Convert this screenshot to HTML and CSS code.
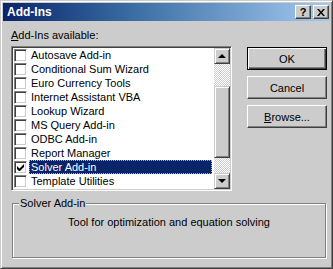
FILE: index.html
```html
<!DOCTYPE html>
<html lang="en">
<head>
    <meta charset="UTF-8">
    <title>Add-Ins</title>
    <link rel="stylesheet" href="styles.css">
</head>
<body>
    <div class="window">
        <div class="titlebar">
            <span class="title">Add-Ins</span>
            <span class="tb-btns">
                <span class="tb-btn help">?</span>
                <span class="tb-btn">
                    <svg width="8" height="7" viewBox="0 0 8 7"><path d="M0 0h2l2 2.5L6 0h2L5 3.5 8 7H6L4 4.5 2 7H0l3-3.5z" fill="#000"/></svg>
                </span>
            </span>
        </div>

        <div class="content">
            <div class="main">
                <div class="left">
                    <label class="caption"><u>A</u>dd-Ins available:</label>
                    <div class="listbox">
                        <ul class="items">
                            <li class="item"><span class="check"></span><span class="name">Autosave Add-in</span></li>
                            <li class="item"><span class="check"></span><span class="name">Conditional Sum Wizard</span></li>
                            <li class="item"><span class="check"></span><span class="name">Euro Currency Tools</span></li>
                            <li class="item"><span class="check"></span><span class="name">Internet Assistant VBA</span></li>
                            <li class="item"><span class="check"></span><span class="name">Lookup Wizard</span></li>
                            <li class="item"><span class="check"></span><span class="name">MS Query Add-in</span></li>
                            <li class="item"><span class="check"></span><span class="name">ODBC Add-in</span></li>
                            <li class="item"><span class="check"></span><span class="name">Report Manager</span></li>
                            <li class="item selected">
                                <span class="check">
                                    <svg width="7" height="7" viewBox="0 0 7 7"><path d="M0 2v3l2 2h1l4-4V0L2.5 4.5z" fill="#000"/></svg>
                                </span>
                                <span class="name">Solver Add-in</span>
                            </li>
                            <li class="item"><span class="check"></span><span class="name">Template Utilities</span></li>
                        </ul>
                        <div class="scrollbar">
                            <span class="sb-btn"><span class="arrow up"></span></span>
                            <div class="sb-track"><div class="sb-thumb"></div></div>
                            <span class="sb-btn"><span class="arrow down"></span></span>
                        </div>
                    </div>
                </div>

                <div class="buttons">
                    <button class="btn default">OK</button>
                    <button class="btn">Cancel</button>
                    <button class="btn"><u>B</u>rowse...</button>
                </div>
            </div>

            <fieldset class="group">
                <legend>Solver Add-in</legend>
                <p class="desc">Tool for optimization and equation solving</p>
            </fieldset>
        </div>
    </div>
</body>
</html>
```

FILE: styles.css
```css
* {
    box-sizing: border-box;
}
body {
    margin: 0;
    font-family: "Liberation Sans", Arial, sans-serif;
    font-size: 11px;
    color: #000;
    background-color: #cccccc;
}
.window {
    width: 333px;
    height: 269px;
    padding: 2px;
    background-color: #cccccc;
    border: 1px solid;
    border-color: #cccccc #404040 #404040 #cccccc;
    box-shadow: inset 1px 1px #fff, inset -1px -1px #808080;
    display: flex;
    flex-direction: column;
}
.titlebar {
    height: 18px;
    padding: 0 1px 0 4px;
    background: linear-gradient(to right, #0a246a, #3a6ea5 40%, #a6caf0);
    display: flex;
    align-items: center;
    justify-content: space-between;
}
.title {
    color: #fff;
    font-weight: bold;
    font-size: 12px;
}
.tb-btns {
    display: flex;
    gap: 2px;
}
.tb-btn {
    width: 16px;
    height: 14px;
    background-color: #cccccc;
    border: 1px solid;
    border-color: #fff #404040 #404040 #fff;
    box-shadow: inset -1px -1px #808080;
    display: flex;
    align-items: center;
    justify-content: center;
}
.tb-btn.help {
    font-weight: bold;
    font-size: 11px;
    line-height: 11px;
}
.content {
    flex: 1;
    padding: 0 0 0 8px;
    display: flex;
    flex-direction: column;
}
.main {
    display: flex;
    gap: 15px;
}
.left {
    width: 221px;
    padding-top: 8px;
}
.caption {
    display: block;
    line-height: 13px;
    margin-bottom: 4px;
}
.listbox {
    height: 145px;
    padding: 1px;
    background-color: #fff;
    border: 1px solid;
    border-color: #808080 #fff #fff #808080;
    box-shadow: inset 1px 1px #404040, inset -1px -1px #cccccc;
    display: flex;
}
.items {
    list-style: none;
    margin: 0;
    padding: 0;
    flex: 1;
}
.item {
    height: 14px;
    display: flex;
    align-items: center;
}
.check {
    width: 13px;
    height: 13px;
    margin-left: 1px;
    margin-right: 2px;
    background-color: #fff;
    border: 1px solid;
    border-color: #808080 #fff #fff #808080;
    box-shadow: inset 1px 1px #404040, inset -1px -1px #cccccc;
    display: flex;
    align-items: center;
    justify-content: center;
}
.name {
    flex: 1;
    height: 14px;
    line-height: 12px;
    padding: 0 1px;
    margin-right: 2px;
    border: 1px solid transparent;
    white-space: nowrap;
}
.selected .name {
    background-color: #0a246a;
    color: #fff;
    border: 1px dotted #b0b0b0;
}
.scrollbar {
    width: 16px;
    display: flex;
    flex-direction: column;
    background: repeating-conic-gradient(#cccccc 0 25%, #fff 0 50%) 0 0 / 2px 2px;
}
.sb-btn, .sb-thumb {
    background-color: #cccccc;
    border: 1px solid;
    border-color: #cccccc #404040 #404040 #cccccc;
    box-shadow: inset 1px 1px #fff, inset -1px -1px #808080;
}
.sb-btn {
    height: 16px;
    display: flex;
    align-items: center;
    justify-content: center;
}
.sb-track {
    flex: 1;
    padding: 22px 0 15px;
}
.sb-thumb {
    height: 100%;
}
.arrow {
    width: 0;
    height: 0;
    border-left: 4px solid transparent;
    border-right: 4px solid transparent;
}
.arrow.up {
    border-bottom: 4px solid #000;
}
.arrow.down {
    border-top: 4px solid #000;
}
.buttons {
    width: 80px;
    padding-top: 26px;
    display: flex;
    flex-direction: column;
    gap: 6px;
}
.btn {
    height: 23px;
    padding: 0;
    font-family: "Liberation Sans", Arial, sans-serif;
    font-size: 11px;
    color: #000;
    background-color: #cccccc;
    border: 1px solid;
    border-color: #fff #404040 #404040 #fff;
    box-shadow: inset -1px -1px #808080;
}
.btn.default {
    border: 1px solid #000;
    box-shadow: inset 1px 1px #fff, inset -1px -1px #404040, inset -2px -2px #808080;
}
.group {
    width: 314px;
    height: 61px;
    margin: 6px 0 0 1px;
    padding: 0 4px;
    border: 1px solid #808080;
    box-shadow: inset 1px 1px #fff, 1px 1px #fff;
}
.group legend {
    padding: 0 1px;
    margin-left: 2px;
    line-height: 13px;
    background-color: #cccccc;
}
.desc {
    margin: 6px 0 0;
    text-align: center;
}
```
